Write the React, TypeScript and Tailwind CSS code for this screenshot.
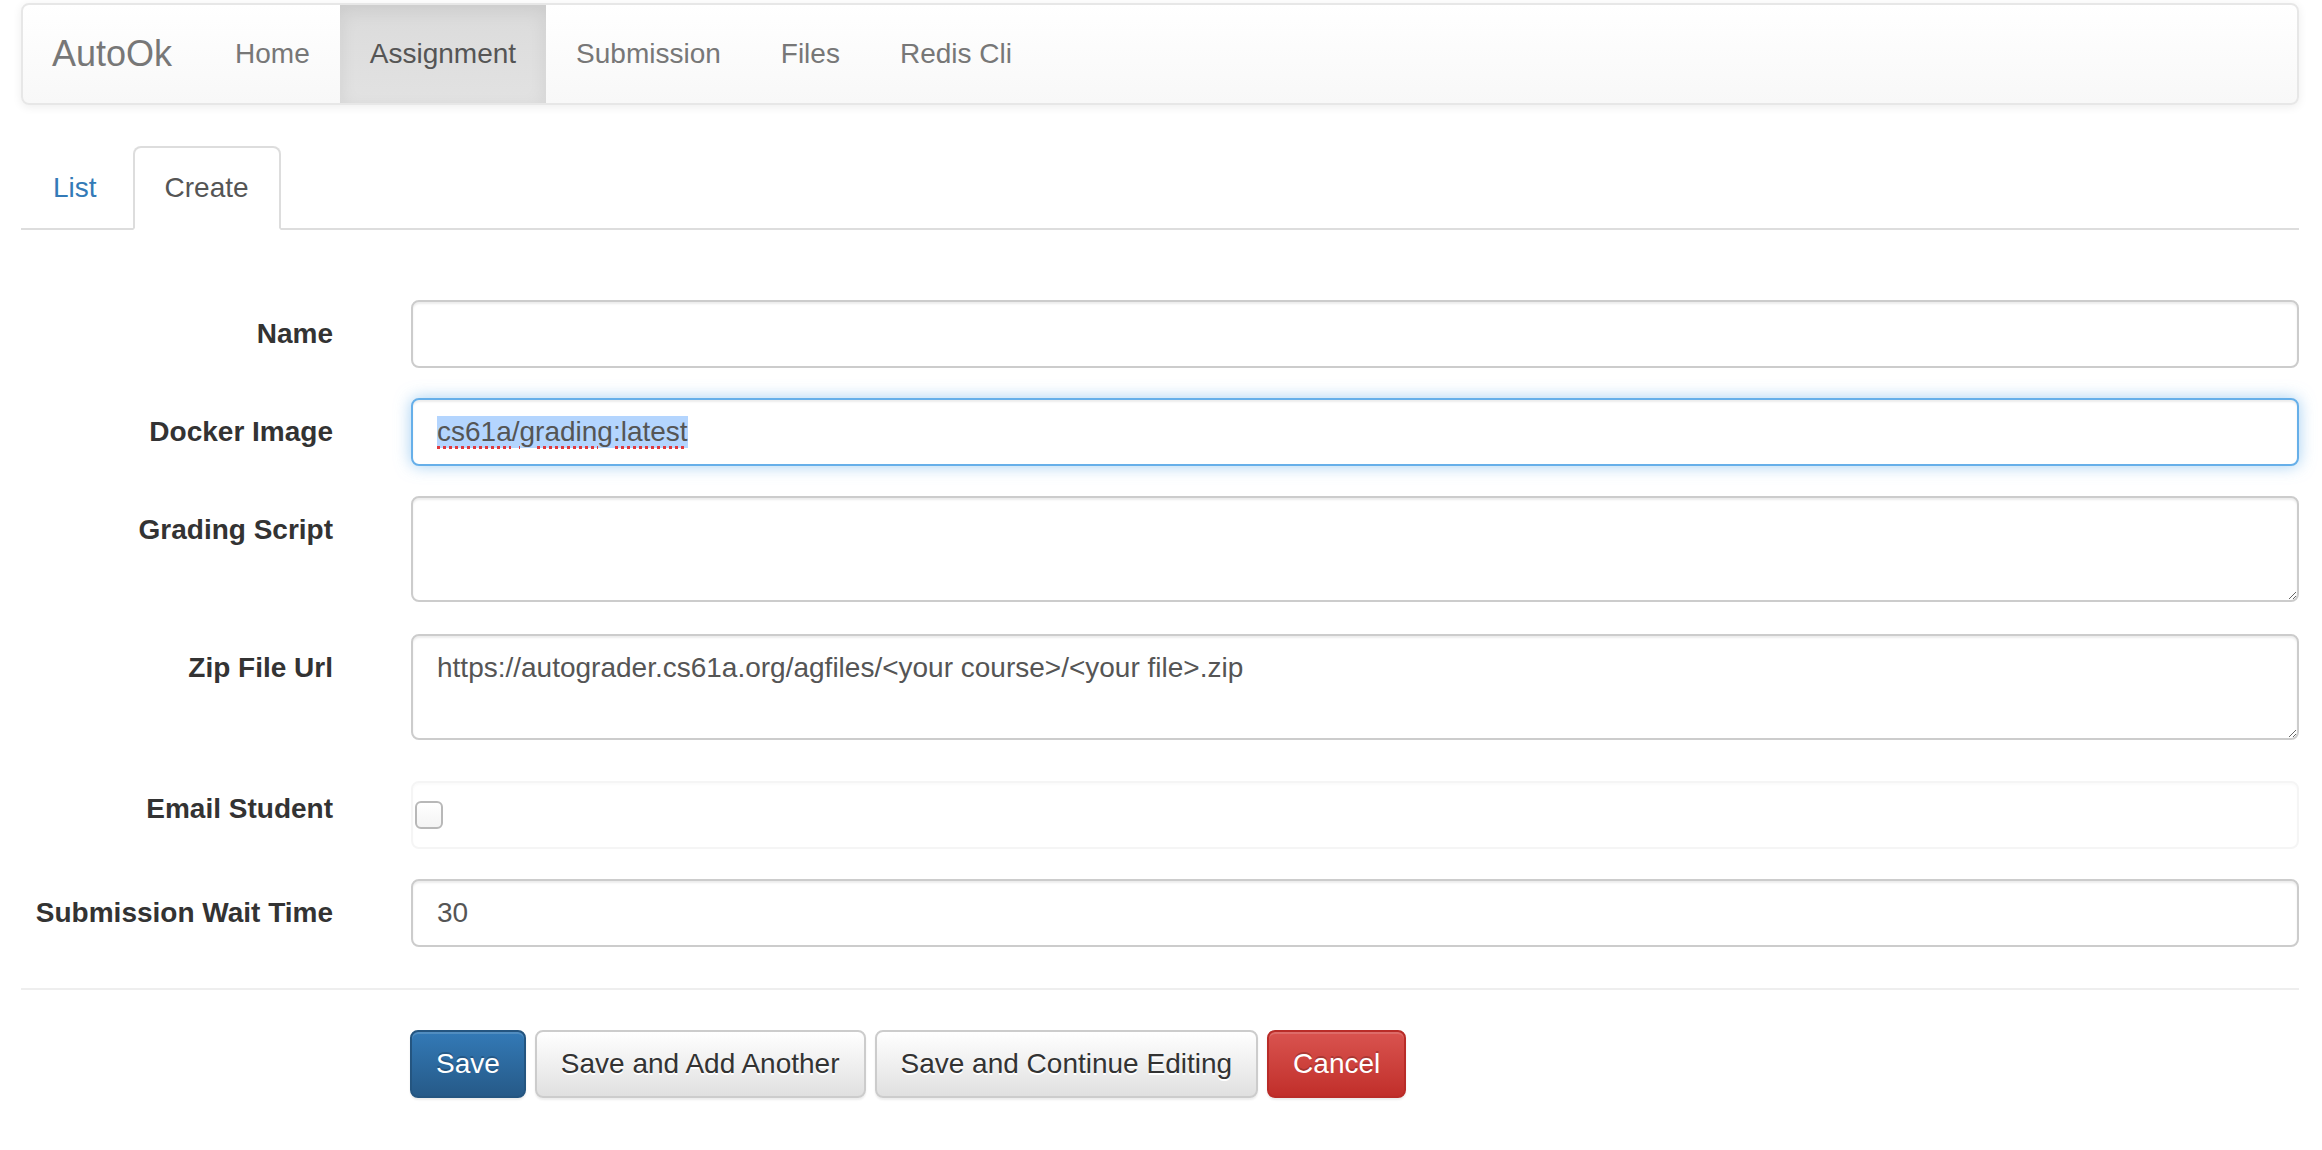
import { useState } from 'react';

const navItems = ['Home', 'Assignment', 'Submission', 'Files', 'Redis Cli'];

const inputBase =
  'block w-full h-[68px] rounded-[8px] border-2 border-[#ccc] bg-white px-[24px] text-[28px] text-[#555] shadow-[inset_0_2px_2px_rgba(0,0,0,0.075)] outline-none';

const textareaBase =
  'block w-full h-[106px] rounded-[8px] border-2 border-[#ccc] bg-white px-[24px] py-[12px] text-[28px] leading-[40px] text-[#555] shadow-[inset_0_2px_2px_rgba(0,0,0,0.075)] outline-none resize-y';

const FormRow = ({
  label,
  labelPad = 'pt-[14px]',
  gap = 'mb-[30px]',
  children,
}: {
  label: string;
  labelPad?: string;
  gap?: string;
  children: React.ReactNode;
}) => (
  <div className={`flex ${gap}`}>
    <label className={`w-[312px] shrink-0 text-right font-bold text-[28px] leading-[40px] text-[#333] ${labelPad}`}>
      {label}
    </label>
    <div className="ml-[78px] flex-1">{children}</div>
  </div>
);

const App = () => {
  const [active] = useState('Assignment');

  return (
    <div className="min-h-screen bg-white font-['Liberation_Sans',Arial,sans-serif] pl-[21px] pr-[23px] pt-[3px]">
      {/* Navbar */}
      <div className="flex h-[102px] rounded-[8px] border-2 border-[#e7e7e7] bg-gradient-to-b from-white to-[#f8f8f8] shadow-[0_2px_10px_rgba(0,0,0,0.075)] overflow-hidden">
        <a className="pl-[29px] pr-[30px] py-[29px] text-[36px] leading-[40px] text-[#777]">AutoOk</a>
        <ul className="ml-[3px] flex">
          {navItems.map((item) => (
            <li key={item}>
              <a
                className={`block px-[30px] py-[29px] text-[28px] leading-[40px] ${
                  active === item
                    ? 'bg-gradient-to-b from-[#dbdbdb] to-[#e2e2e2] text-[#555] shadow-[inset_0_6px_18px_rgba(0,0,0,0.075)]'
                    : 'text-[#777]'
                }`}
              >
                {item}
              </a>
            </li>
          ))}
        </ul>
      </div>

      {/* Tabs */}
      <ul className="mt-[41px] flex border-b-2 border-[#ddd]">
        <li className="-mb-[2px] mr-[4px]">
          <a className="block border-2 border-transparent px-[30px] py-[20px] text-[28px] leading-[40px] text-[#337ab7]">List</a>
        </li>
        <li className="-mb-[2px]">
          <a className="block rounded-t-[8px] border-2 border-[#ddd] border-b-transparent bg-white px-[30px] py-[20px] text-[28px] leading-[40px] text-[#555]">
            Create
          </a>
        </li>
      </ul>

      {/* Form */}
      <form className="mt-[70px]">
        <FormRow label="Name">
          <input className={inputBase} defaultValue="" readOnly />
        </FormRow>

        <FormRow label="Docker Image">
          <div className="flex h-[68px] w-full items-center rounded-[8px] border-2 border-[#66afe9] bg-white px-[24px] text-[28px] text-[#555] shadow-[inset_0_2px_2px_rgba(0,0,0,0.075),0_0_16px_rgba(102,175,233,0.6)]">
            <span className="bg-[#b4d5fe] leading-[32px]">
              <span className="underline decoration-dotted decoration-[#e0393e] decoration-[3px] underline-offset-[5px]">cs61a</span>
              /
              <span className="underline decoration-dotted decoration-[#e0393e] decoration-[3px] underline-offset-[5px]">grading:latest</span>
            </span>
          </div>
        </FormRow>

        <FormRow label="Grading Script" gap="mb-[32px]">
          <textarea className={textareaBase} defaultValue="" readOnly />
        </FormRow>

        <FormRow label="Zip File Url" gap="mb-[31px]">
          <textarea
            className={textareaBase}
            defaultValue="https://autograder.cs61a.org/agfiles/<your course>/<your file>.zip"
            readOnly
          />
        </FormRow>

        <FormRow label="Email Student" labelPad="pt-[18px]">
          <div className="pt-[10px]">
            <div className="h-[68px] w-full rounded-[8px] border-2 border-[#f5f5f5] bg-white shadow-[inset_0_2px_2px_rgba(0,0,0,0.02)] pl-[2px] pt-[18px]">
              <div className="h-[28px] w-[28px] rounded-[6px] border-2 border-[#b8b8b8] bg-gradient-to-b from-white to-[#f4f4f4]" />
            </div>
          </div>
        </FormRow>

        <FormRow label="Submission Wait Time">
          <input className={inputBase} defaultValue="30" readOnly />
        </FormRow>

        <hr className="mt-[41px] border-t-2 border-[#eee]" />

        <div className="mt-[40px] flex gap-[9px] pl-[389px]">
          <button
            type="button"
            className="h-[68px] rounded-[8px] border-2 border-[#245580] bg-gradient-to-b from-[#337ab7] to-[#265a88] px-[24px] text-[28px] text-white [text-shadow:0_-2px_0_rgba(0,0,0,0.2)] shadow-[inset_0_2px_0_rgba(255,255,255,0.15),0_2px_2px_rgba(0,0,0,0.075)]"
          >
            Save
          </button>
          <button
            type="button"
            className="h-[68px] rounded-[8px] border-2 border-[#ccc] bg-gradient-to-b from-white to-[#e0e0e0] px-[24px] text-[28px] text-[#333] [text-shadow:0_2px_0_#fff] shadow-[inset_0_2px_0_rgba(255,255,255,0.15),0_2px_2px_rgba(0,0,0,0.075)]"
          >
            Save and Add Another
          </button>
          <button
            type="button"
            className="h-[68px] rounded-[8px] border-2 border-[#ccc] bg-gradient-to-b from-white to-[#e0e0e0] px-[24px] text-[28px] text-[#333] [text-shadow:0_2px_0_#fff] shadow-[inset_0_2px_0_rgba(255,255,255,0.15),0_2px_2px_rgba(0,0,0,0.075)]"
          >
            Save and Continue Editing
          </button>
          <button
            type="button"
            className="h-[68px] rounded-[8px] border-2 border-[#b92c28] bg-gradient-to-b from-[#d9534f] to-[#c12e2a] px-[24px] text-[28px] text-white [text-shadow:0_-2px_0_rgba(0,0,0,0.2)] shadow-[inset_0_2px_0_rgba(255,255,255,0.15),0_2px_2px_rgba(0,0,0,0.075)]"
          >
            Cancel
          </button>
        </div>
      </form>
    </div>
  );
};

export default App;
